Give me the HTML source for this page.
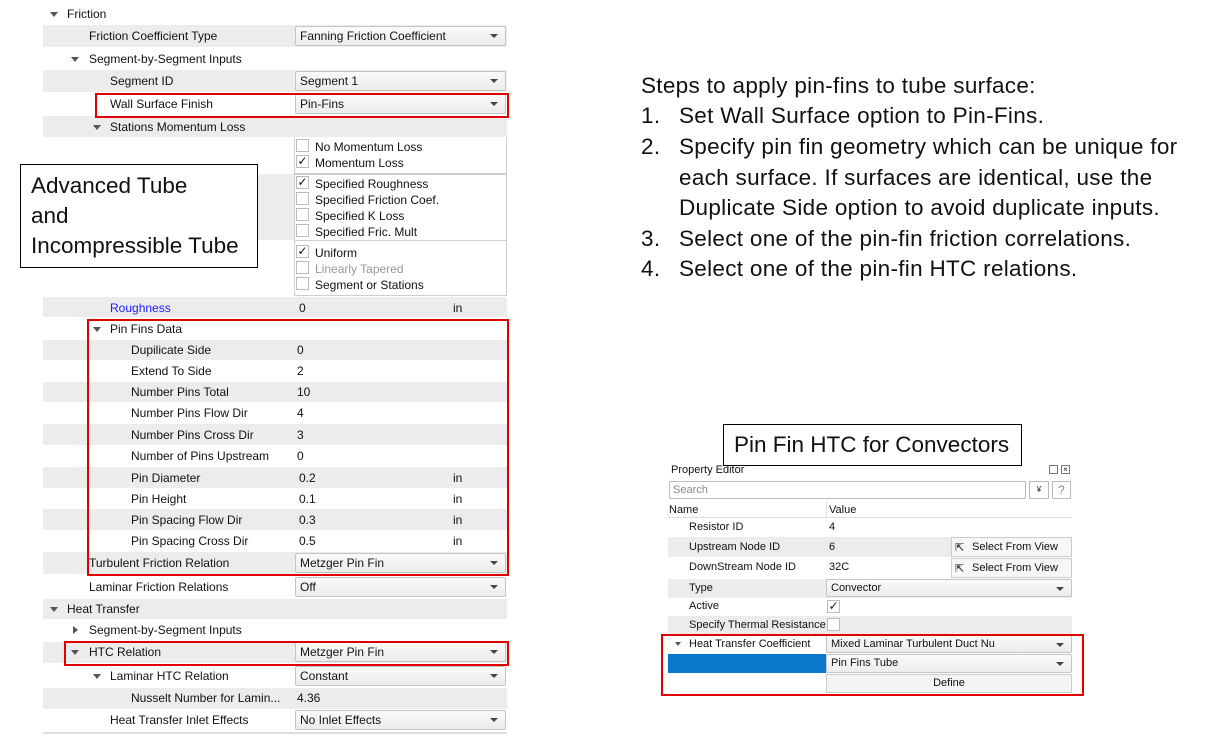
<!DOCTYPE html>
<html><head><meta charset="utf-8"><style>
*{margin:0;padding:0;box-sizing:border-box}
body{width:1212px;height:743px;background:#fff;position:relative;overflow:hidden;font-family:"Liberation Sans",sans-serif;font-size:12px;color:#111}
.a{position:absolute}
.g{position:absolute;left:43px;width:464px;background:#ececec}
.t{position:absolute;white-space:nowrap;line-height:14px}
.dd{position:absolute;left:295px;width:211px;height:20px;border:1px solid #c4c4c4;border-radius:2px;background:linear-gradient(#fafafa,#ececec);padding-left:4px;line-height:18px;white-space:nowrap}
.dd:after{content:"";position:absolute;right:7px;top:7px;border-left:4px solid transparent;border-right:4px solid transparent;border-top:4px solid #444}
.tri{position:absolute;width:0;height:0;border-left:4px solid transparent;border-right:4px solid transparent;border-top:5px solid #555}
.trr{position:absolute;width:0;height:0;border-top:4px solid transparent;border-bottom:4px solid transparent;border-left:5px solid #555}
.red{position:absolute;border:2.5px solid #e00000}
.cb{position:absolute;width:13px;height:13px;border:1px solid #bbb;background:#fff;font-size:12px;line-height:11px;text-align:center}
.box{position:absolute;border:1px solid #000;background:#fff;font-size:22.5px;line-height:30px;padding-left:10px;white-space:nowrap}
.rt{position:absolute;left:641px;font-size:22.5px;letter-spacing:0.3px;white-space:nowrap;color:#111}
.pe{font-size:11px}
</style></head><body>

<div class="g" style="top:25px;height:22px"></div>
<div class="g" style="top:70px;height:22px"></div>
<div class="g" style="top:116px;height:21px"></div>
<div class="g" style="top:174px;width:252px;height:66px"></div>
<div class="g" style="top:297px;height:20px"></div>
<div class="g" style="top:340px;height:20px"></div>
<div class="g" style="top:382px;height:20px"></div>
<div class="g" style="top:424px;height:21px"></div>
<div class="g" style="top:467px;height:21px"></div>
<div class="g" style="top:509px;height:21px"></div>
<div class="g" style="top:552px;height:22px"></div>
<div class="g" style="top:599px;height:20px"></div>
<div class="g" style="top:642px;height:21px"></div>
<div class="g" style="top:688px;height:21px"></div>
<div class="g" style="top:732px;height:2px;background:#ddd"></div>

<div class="tri" style="left:50px;top:12px"></div><div class="t" style="left:67px;top:7px">Friction</div>
<div class="t" style="left:89px;top:29px">Friction Coefficient Type</div><div class="dd" style="top:26px">Fanning Friction Coefficient</div>
<div class="tri" style="left:71px;top:57px"></div><div class="t" style="left:89px;top:52px">Segment-by-Segment Inputs</div>
<div class="t" style="left:110px;top:74px">Segment ID</div><div class="dd" style="top:71px">Segment 1</div>
<div class="t" style="left:110px;top:97px">Wall Surface Finish</div><div class="dd" style="top:94px">Pin-Fins</div>
<div class="tri" style="left:93px;top:125px"></div><div class="t" style="left:110px;top:120px">Stations Momentum Loss</div>

<div class="a" style="left:294px;top:137px;width:213px;height:37px;border:1px solid #cfcfcf;border-top:none"></div>
<div class="a" style="left:294px;top:174px;width:213px;height:67px;border:1px solid #cfcfcf"></div>
<div class="a" style="left:294px;top:241px;width:213px;height:55px;border:1px solid #cfcfcf;border-top:none"></div>
<div class="cb" style="left:296px;top:139px"></div><div class="t" style="left:315px;top:140px">No Momentum Loss</div>
<div class="cb" style="left:296px;top:155px">✓</div><div class="t" style="left:315px;top:156px">Momentum Loss</div>
<div class="cb" style="left:296px;top:176px">✓</div><div class="t" style="left:315px;top:177px">Specified Roughness</div>
<div class="cb" style="left:296px;top:192px"></div><div class="t" style="left:315px;top:193px">Specified Friction Coef.</div>
<div class="cb" style="left:296px;top:208px"></div><div class="t" style="left:315px;top:209px">Specified K Loss</div>
<div class="cb" style="left:296px;top:224px"></div><div class="t" style="left:315px;top:225px">Specified Fric. Mult</div>
<div class="cb" style="left:296px;top:245px">✓</div><div class="t" style="left:315px;top:246px">Uniform</div>
<div class="cb" style="left:296px;top:261px"></div><div class="t" style="left:315px;top:262px;color:#999">Linearly Tapered</div>
<div class="cb" style="left:296px;top:277px"></div><div class="t" style="left:315px;top:278px">Segment or Stations</div>

<div class="box" style="left:20px;top:164px;width:238px;height:104px;padding-top:6px">Advanced Tube<br>and<br>Incompressible Tube</div>

<div class="t" style="left:110px;top:301px;color:#1a1aff">Roughness</div><div class="t" style="left:299px;top:301px">0</div><div class="t" style="left:453px;top:301px">in</div>
<div class="tri" style="left:93px;top:327px"></div><div class="t" style="left:110px;top:322px">Pin Fins Data</div>
<div class="t" style="left:131px;top:343px">Dupilicate Side</div><div class="t" style="left:297px;top:343px">0</div>
<div class="t" style="left:131px;top:364px">Extend To Side</div><div class="t" style="left:297px;top:364px">2</div>
<div class="t" style="left:131px;top:385px">Number Pins Total</div><div class="t" style="left:297px;top:385px">10</div>
<div class="t" style="left:131px;top:406px">Number Pins Flow Dir</div><div class="t" style="left:297px;top:406px">4</div>
<div class="t" style="left:131px;top:428px">Number Pins Cross Dir</div><div class="t" style="left:297px;top:428px">3</div>
<div class="t" style="left:131px;top:449px">Number of Pins Upstream</div><div class="t" style="left:297px;top:449px">0</div>
<div class="t" style="left:131px;top:471px">Pin Diameter</div><div class="t" style="left:299px;top:471px">0.2</div><div class="t" style="left:453px;top:471px">in</div>
<div class="t" style="left:131px;top:492px">Pin Height</div><div class="t" style="left:299px;top:492px">0.1</div><div class="t" style="left:453px;top:492px">in</div>
<div class="t" style="left:131px;top:513px">Pin Spacing Flow Dir</div><div class="t" style="left:299px;top:513px">0.3</div><div class="t" style="left:453px;top:513px">in</div>
<div class="t" style="left:131px;top:534px">Pin Spacing Cross Dir</div><div class="t" style="left:299px;top:534px">0.5</div><div class="t" style="left:453px;top:534px">in</div>
<div class="t" style="left:89px;top:556px">Turbulent Friction Relation</div><div class="dd" style="top:553px">Metzger Pin Fin</div>
<div class="t" style="left:89px;top:580px">Laminar Friction Relations</div><div class="dd" style="top:577px">Off</div>
<div class="tri" style="left:50px;top:607px"></div><div class="t" style="left:67px;top:602px">Heat Transfer</div>
<div class="trr" style="left:73px;top:626px"></div><div class="t" style="left:89px;top:623px">Segment-by-Segment Inputs</div>
<div class="tri" style="left:71px;top:650px"></div><div class="t" style="left:89px;top:645px">HTC Relation</div><div class="dd" style="top:642px">Metzger Pin Fin</div>
<div class="tri" style="left:93px;top:674px"></div><div class="t" style="left:110px;top:669px">Laminar HTC Relation</div><div class="dd" style="top:666px">Constant</div>
<div class="t" style="left:131px;top:691px">Nusselt Number for Lamin...</div><div class="t" style="left:297px;top:691px">4.36</div>
<div class="t" style="left:110px;top:713px">Heat Transfer Inlet Effects</div><div class="dd" style="top:710px">No Inlet Effects</div>

<div class="red" style="left:95px;top:93px;width:414px;height:25px"></div>
<div class="red" style="left:87px;top:319px;width:422px;height:257px"></div>
<div class="red" style="left:64px;top:641px;width:445px;height:25px"></div>

<div class="rt" style="top:73px">Steps to apply pin-fins to tube surface:</div>
<div class="rt" style="top:103px">1.</div><div class="rt" style="top:103px;left:679px">Set Wall Surface option to Pin-Fins.</div>
<div class="rt" style="top:134px">2.</div><div class="rt" style="top:134px;left:679px">Specify pin fin geometry which can be unique for</div>
<div class="rt" style="top:165px;left:679px">each surface. If surfaces are identical, use the</div>
<div class="rt" style="top:195px;left:679px">Duplicate Side option to avoid duplicate inputs.</div>
<div class="rt" style="top:226px">3.</div><div class="rt" style="top:226px;left:679px">Select one of the pin-fin friction correlations.</div>
<div class="rt" style="top:256px">4.</div><div class="rt" style="top:256px;left:679px">Select one of the pin-fin HTC relations.</div>

<div class="a pe" style="left:667px;top:462px;width:406px;height:232px;background:#fff"></div>
<div class="a pe" style="left:671px;top:464px">Property Editor</div>
<div class="a" style="left:1049px;top:465px;width:9px;height:9px;border:1px solid #777"></div>
<div class="a" style="left:1061px;top:465px;width:9px;height:9px;border:1px solid #777;font-size:8px;line-height:7px;text-align:center">×</div>
<div class="a pe" style="left:669px;top:481px;width:357px;height:18px;border:1px solid #bbb;border-radius:2px;color:#888;padding:2px 3px">Search</div>
<div class="a" style="left:1029px;top:481px;width:20px;height:18px;border:1px solid #bbb;font-size:8px;text-align:center;line-height:16px">¥</div>
<div class="a" style="left:1052px;top:481px;width:19px;height:18px;border:1px solid #bbb;color:#888;text-align:center;line-height:16px">?</div>
<div class="a" style="left:668px;top:502px;width:404px;height:16px;border-bottom:1px solid #ddd"></div>
<div class="a pe" style="left:669px;top:504px">Name</div><div class="a pe" style="left:829px;top:504px">Value</div>
<div class="a" style="left:826px;top:502px;width:1px;height:16px;background:#ddd"></div>
<div class="a pe" style="left:689px;top:521px">Resistor ID</div><div class="a pe" style="left:829px;top:521px">4</div>
<div class="a" style="left:668px;top:537px;width:404px;height:20px;background:#ececec"></div>
<div class="a pe" style="left:689px;top:541px">Upstream Node ID</div><div class="a pe" style="left:829px;top:541px">6</div>
<div class="a pe" style="left:951px;top:537px;width:121px;height:20px;border:1px solid #ccc;background:#f6f6f6;padding:3px 0 0 20px">Select From View</div>
<div class="a pe" style="left:689px;top:561px">DownStream Node ID</div><div class="a pe" style="left:829px;top:561px">32C</div>
<div class="a pe" style="left:951px;top:558px;width:121px;height:20px;border:1px solid #ccc;background:#f6f6f6;padding:3px 0 0 20px">Select From View</div>
<div class="a" style="left:955px;top:541px;font-size:11px">⇱</div><div class="a" style="left:955px;top:562px;font-size:11px">⇱</div>
<div class="a" style="left:668px;top:579px;width:404px;height:19px;background:#ececec"></div>
<div class="a pe" style="left:689px;top:582px">Type</div>
<div class="dd pe" style="left:826px;top:579px;width:246px;height:18px;line-height:16px">Convector</div>
<div class="a pe" style="left:689px;top:600px">Active</div>
<div class="cb" style="left:827px;top:600px">✓</div>
<div class="a" style="left:668px;top:616px;width:404px;height:18px;background:#ececec"></div>
<div class="a pe" style="left:689px;top:619px">Specify Thermal Resistance</div>
<div class="cb" style="left:827px;top:618px"></div>
<div class="tri" style="left:675px;top:642px;border-width:4px 3px 0 3px"></div>
<div class="a pe" style="left:689px;top:638px">Heat Transfer Coefficient</div>
<div class="dd pe" style="left:826px;top:635px;width:246px;height:18px;line-height:16px">Mixed Laminar Turbulent Duct Nu</div>
<div class="a" style="left:668px;top:654px;width:158px;height:19px;background:#0a78cc"></div>
<div class="dd pe" style="left:826px;top:654px;width:246px;height:19px;line-height:17px">Pin Fins Tube</div>
<div class="a pe" style="left:826px;top:674px;width:246px;height:19px;border:1px solid #ccc;background:#f4f4f4;text-align:center;line-height:17px">Define</div>
<div class="red" style="left:661px;top:634px;width:423px;height:62px"></div>

<div class="box" style="left:723px;top:424px;width:299px;height:42px;padding-top:5px">Pin Fin HTC for Convectors</div>
</body></html>
